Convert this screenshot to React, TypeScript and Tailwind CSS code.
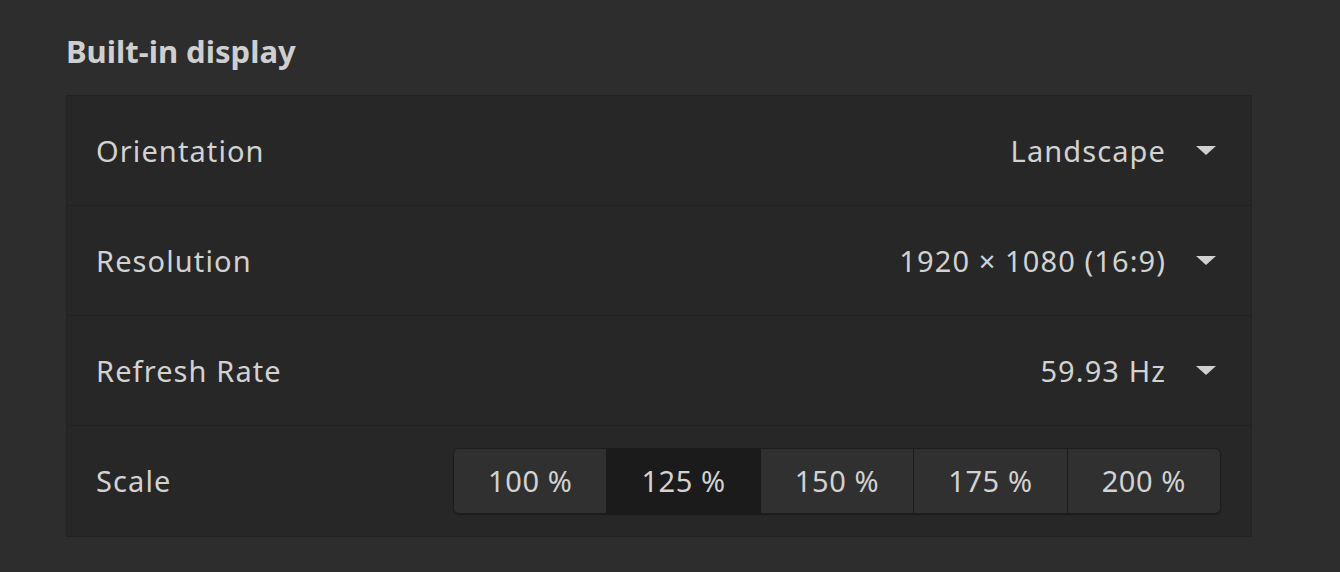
import { useState } from 'react';

const scales = ['100 %', '125 %', '150 %', '175 %', '200 %'];

function Caret() {
  return (
    <svg width="20" height="9" viewBox="0 0 20 9" className="ml-[30px] shrink-0">
      <path d="M0 0 H20 L10 9 Z" fill="#d0d0d0" />
    </svg>
  );
}

function DropdownRow({ label, value }: { label: string; value: string }) {
  return (
    <div className="flex h-[110px] items-center justify-between border-b border-[#212121] pr-[35px] pl-[29px]">
      <span>{label}</span>
      <div className="flex items-center">
        <span>{value}</span>
        <Caret />
      </div>
    </div>
  );
}

export default function App() {
  const [scale, setScale] = useState('125 %');

  return (
    <div className="min-h-[572px] w-full bg-[#2d2d2d] px-[66px] pt-[28px] font-['Noto_Sans',sans-serif] text-[#d2d2d2]">
      <h2 className="mb-[21px] text-[31px] leading-[46px] font-bold text-[#cfcfcf]">Built-in display</h2>
      <div className="w-[1186px] border border-[#232323] bg-[#272727] text-[29px] tracking-[1.1px]">
        <DropdownRow label="Orientation" value="Landscape" />
        <DropdownRow label="Resolution" value="1920 × 1080 (16:9)" />
        <DropdownRow label="Refresh Rate" value="59.93 Hz" />
        <div className="flex h-[110px] items-center justify-between pr-[30px] pl-[29px]">
          <span>Scale</span>
          <div className="flex h-[66px] w-[768px] overflow-hidden rounded-[6px] border border-[#1c1c1c] shadow-[0_1px_1px_rgba(0,0,0,0.3)]">
            {scales.map((s, i) => (
              <button
                key={s}
                onClick={() => setScale(s)}
                className={
                  'flex-1 text-[29px] tracking-[0.6px] text-[#d2d2d2] ' +
                  (i > 0 ? 'border-l border-[#1c1c1c] ' : '') +
                  (scale === s ? 'bg-[#1b1b1b]' : 'bg-[#303030]')
                }
              >
                {s}
              </button>
            ))}
          </div>
        </div>
      </div>
    </div>
  );
}
